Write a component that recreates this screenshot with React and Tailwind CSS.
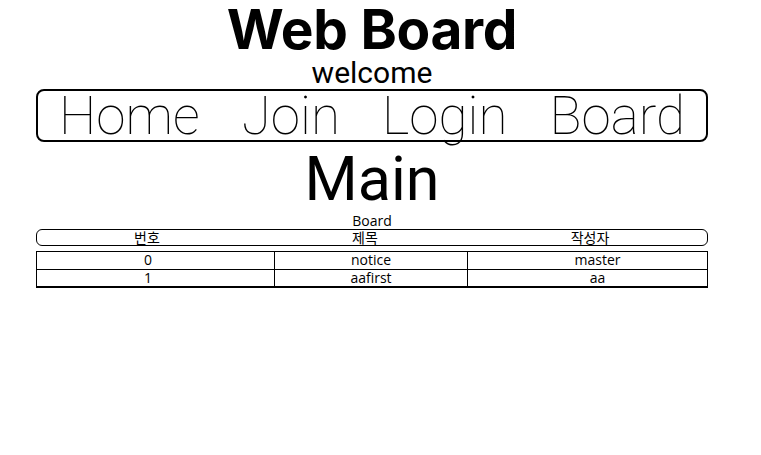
export default function App() {
  const rows = [
    { no: 0, title: "notice", writer: "master" },
    { no: 1, title: "aafirst", writer: "aa" },
  ]

  return (
    <div className="w-[761px] h-[455px] bg-white text-black">
      <div className="ml-[36px] w-[672px] flex flex-col">
        <h1 className="text-center text-[55px] leading-[58px] font-bold font-['Inter',sans-serif] tracking-[-0.3px]">
          Web Board
        </h1>
        <p className="text-center text-[30px] leading-[30px] font-['Roboto',sans-serif]">welcome</p>

        <nav className="mt-[1px] h-[53px] border-2 border-black rounded-[8px] flex items-center justify-around font-['Roboto',sans-serif] font-thin text-[53px] leading-[50px]">
          <a>Home</a>
          <a>Join</a>
          <a>Login</a>
          <a>Board</a>
        </nav>

        <h2 className="mt-[3px] text-center text-[61px] leading-[68px] font-['Roboto',sans-serif]">Main</h2>

        <div className="font-['Open_Sans','Noto_Sans_CJK_KR',sans-serif] text-[14px]">
          <div className="text-center leading-[16px]">Board</div>
          <div className="h-[17px] border border-black rounded-[6px] grid grid-cols-[220px_216px_1fr] leading-[15px] font-['Noto_Sans_CJK_KR',sans-serif]">
            <div className="text-center">번호</div>
            <div className="text-center">제목</div>
            <div className="text-center">작성자</div>
          </div>
          <div className="mt-[5px] border-t border-l border-r border-b-2 border-black">
            {rows.map((r, i) => (
              <div
                key={r.no}
                className={`grid grid-cols-[238px_193px_1fr] h-[17px] leading-[16px] ${i > 0 ? "border-t border-black" : ""}`}
              >
                <div className="text-center pr-[15px] border-r border-black">{r.no}</div>
                <div className="text-center border-r border-black">{r.title}</div>
                <div className="text-center pl-[20px]">{r.writer}</div>
              </div>
            ))}
          </div>
        </div>
      </div>
    </div>
  )
}
